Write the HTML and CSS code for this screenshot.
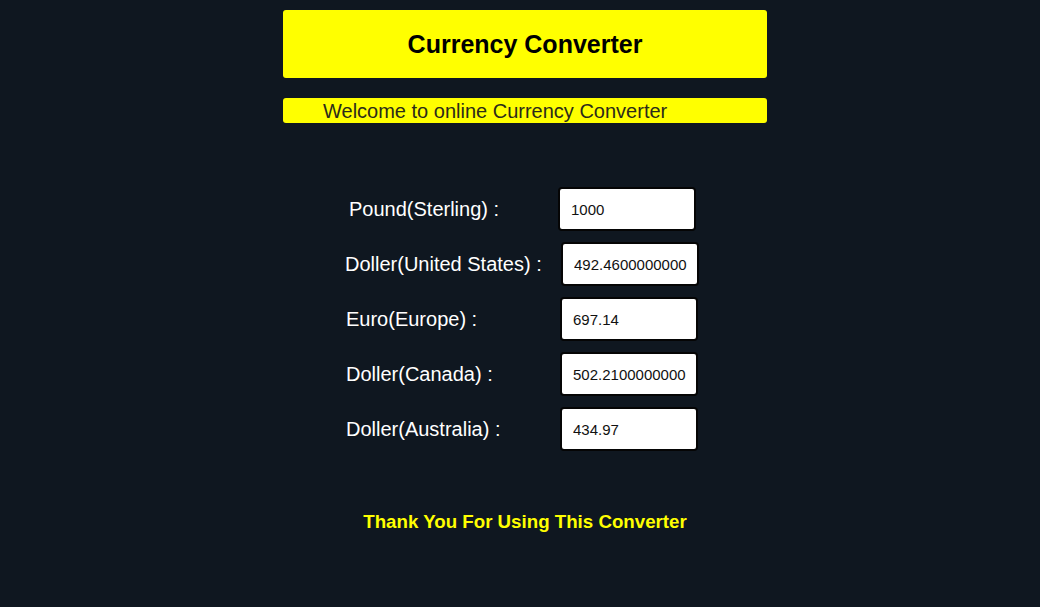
FILE: index.html
```html
<!DOCTYPE html>
<html lang="en">
<head>
<meta charset="utf-8">
<title>Currency Converter</title>
<link rel="stylesheet" href="styles.css">
</head>
<body>
<main class="app">
  <header class="title-box">
    <h1 class="title">Currency Converter</h1>
  </header>
  <div class="welcome">Welcome to online Currency Converter</div>

  <form class="converter">
    <label class="label label--gbp" for="gbp">Pound(Sterling) :</label>
    <input class="field field--gbp" id="gbp" type="text" value="1000">

    <label class="label label--usd" for="usd">Doller(United States) :</label>
    <input class="field field--usd" id="usd" type="text" value="492.4600000000">

    <label class="label" for="eur">Euro(Europe) :</label>
    <input class="field" id="eur" type="text" value="697.14">

    <label class="label" for="cad">Doller(Canada) :</label>
    <input class="field" id="cad" type="text" value="502.2100000000">

    <label class="label" for="aud">Doller(Australia) :</label>
    <input class="field" id="aud" type="text" value="434.97">
  </form>

  <p class="thanks">Thank You For Using This Converter</p>
</main>
</body>
</html>
```

FILE: styles.css
```css
html, body {
  margin: 0;
  padding: 0;
  background: #0f1720;
}

body {
  font-family: "Liberation Sans", Arial, sans-serif;
  padding-left: 10px;
}

.app {
  width: 484px;
  margin: 10px auto 0;
  display: flex;
  flex-direction: column;
}

.title-box {
  background: #ffff00;
  border-radius: 3px;
  height: 68px;
  display: flex;
  align-items: center;
  justify-content: center;
}

.title {
  margin: 0;
  font-size: 25px;
  font-weight: bold;
  color: #000;
  line-height: 28px;
}

.welcome {
  margin-top: 20px;
  background: #ffff00;
  border-radius: 3px;
  height: 25px;
  line-height: 26px;
  font-size: 20px;
  color: #2b2b1a;
  padding-left: 40px;
  white-space: nowrap;
  overflow: hidden;
}

.converter {
  margin-top: 64px;
  padding-left: 63px;
  display: grid;
  grid-template-columns: 214px 138px;
  row-gap: 11px;
  align-items: center;
}

.label {
  color: #ffffff;
  font-size: 20px;
}

.label--gbp {
  margin-left: 3px;
}

.label--usd {
  margin-left: -1px;
}

.field {
  box-sizing: border-box;
  width: 138px;
  height: 44px;
  border: 2px solid #050505;
  border-radius: 4px;
  background: #fff;
  padding: 0 0 0 11px;
  font-family: "Liberation Sans", Arial, sans-serif;
  font-size: 15px;
  color: #111;
  outline: none;
}

.field--gbp {
  margin-left: -2px;
}

.field--usd {
  margin-left: 1px;
}

.thanks {
  margin: 60px 0 0;
  text-align: center;
  font-size: 18.72px;
  font-weight: bold;
  color: #ffff00;
  line-height: 21px;
}
```
